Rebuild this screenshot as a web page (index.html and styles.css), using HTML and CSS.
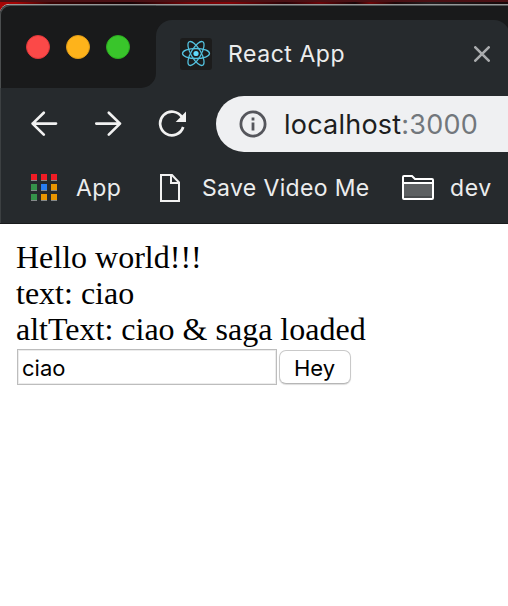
FILE: index.html
```html
<!DOCTYPE html>
<html lang="en">
<head>
<meta charset="utf-8">
<title>React App</title>
<link rel="stylesheet" href="styles.css">
</head>
<body>
<div class="desktop">
  <div class="window">
    <header class="tabstrip">
      <div class="controls">
        <div class="lights"><span class="light red"></span><span class="light yellow"></span><span class="light green"></span></div>
      </div>
      <div class="tab">
        <svg class="favicon" width="32" height="32" viewBox="0 0 32 32" fill="none" stroke="#53c1de" stroke-width="1.3">
          <rect width="32" height="32" rx="3" fill="#1c1c1c" stroke="none"/>
          <circle cx="16" cy="15.5" r="2.6" fill="#61dafb" stroke="none"/>
          <ellipse cx="16" cy="15.5" rx="13.5" ry="5"/>
          <ellipse cx="16" cy="15.5" rx="13.5" ry="5" transform="rotate(60 16 15.5)"/>
          <ellipse cx="16" cy="15.5" rx="13.5" ry="5" transform="rotate(120 16 15.5)"/>
        </svg>
        <span class="tab-title">React App</span>
        <svg class="close" width="16" height="16" viewBox="0 0 16 16" stroke="#a9abad" stroke-width="2.6" stroke-linecap="round"><path d="M1.3 1.3 14.7 14.7M14.7 1.3 1.3 14.7"/></svg>
      </div>
    </header>
    <nav class="toolbar">
      <svg class="nav-icon" width="28" height="28" viewBox="0 0 28 28" fill="none" stroke="#f1f1f1" stroke-width="2.7" stroke-linecap="round" stroke-linejoin="round"><path d="M13.8 2.8 2.6 13.6 13.8 24.6M2.6 13.6H26"/></svg>
      <svg class="nav-icon" width="28" height="28" viewBox="0 0 28 28" fill="none" stroke="#f1f1f1" stroke-width="2.7" stroke-linecap="round" stroke-linejoin="round"><path d="M14.8 2.8 26 13.6 14.8 24.6M26 13.6H2.3"/></svg>
      <svg class="nav-icon reload" width="28" height="28" viewBox="0 0 28 28" fill="none" stroke="#f1f1f1" stroke-width="2.7"><path d="M24 7.3A11.8 11.8 0 1 0 25.2 17"/><path d="M28 1.6V12H17.7Z" fill="#f1f1f1" stroke="none"/></svg>
      <div class="address">
        <svg width="28" height="28" viewBox="0 0 28 28" fill="none"><circle cx="14" cy="14" r="12.1" stroke="#55565c" stroke-width="2.8"/><path d="M12.6 7.6h2.8v2.8h-2.8zM12.6 12.6h2.8v8h-2.8z" fill="#55565c"/></svg>
        <span class="url">localhost<span class="port">:3000</span></span>
      </div>
    </nav>
    <nav class="bookmarks">
      <div class="apps"><i class="r"></i><i class="r"></i><i class="r"></i><i class="g"></i><i class="b"></i><i class="o"></i><i class="g"></i><i class="o"></i><i class="o"></i></div>
      <span class="label app-label">App</span>
      <svg class="page-icon" width="20" height="28" viewBox="0 0 20 28" fill="none" stroke="#f1f1f1" stroke-width="2"><path d="M1 1H12L19 8.5V27H1ZM11 1V9H19"/></svg>
      <span class="label save-label">Save Video Me</span>
      <svg class="folder-icon" width="32" height="25" viewBox="0 0 32 25" fill="none" stroke="#fff" stroke-width="2"><path d="M2 8h28v14H2z" fill="#5d6062" stroke="none"/><path d="M2 21h28v2H2z" fill="#494c4e" stroke="none"/><path d="M1 2Q1 1 2 1H10L13 4H30Q31 4 31 5V23Q31 24 30 24H2Q1 24 1 23ZM1 8H31"/></svg>
      <span class="label dev-label">dev</span>
    </nav>
    <main class="page">
      <div>Hello world!!!</div>
      <div>text: ciao</div>
      <div>altText: ciao &amp; saga loaded</div>
      <div class="form"><input class="field" type="text" value="ciao"><button class="button">Hey</button></div>
    </main>
  </div>
</div>
</body>
</html>
```
FILE: styles.css
```css
* { box-sizing: border-box; }
body { margin: 0; overflow: hidden; font-family: Inter, "Liberation Sans", sans-serif; }
svg { display: block; flex: none; }
.desktop {
  width: 508px; height: 606px; padding-top: 4px;
  background: linear-gradient(180deg, #4a1014 0 2px, transparent 2px), linear-gradient(90deg, #a50505 0 16px, #3a0303 50px, #170305 130px, #720407 190px, #820306 230px, #270307 285px, #6a0408 320px, #180507 355px, #6d0507 370px, #1e0708 395px, #241d1f 430px, #170809 508px);
}
.window { height: 602px; border-radius: 9px 0 0 0; overflow: hidden; background: #fff; }
.tabstrip { height: 84px; display: flex; background: linear-gradient(#191a1b 0 60px, #262a2d 60px); border-top: 1px solid #969999; border-radius: 9px 0 0 0; box-shadow: inset 1px 1px #555859; }
.controls { width: 156px; height: 83px; padding: 30px 26px; background: #191a1b; border-radius: 9px 0 15px 0; box-shadow: inset 1px 1px #4b4e4f; }
.lights { display: flex; gap: 16px; }
.light { width: 24px; height: 24px; border-radius: 50%; }
.red { background: #fb4948; border: 1px solid #df3639; }
.yellow { background: #feb31b; border: 1px solid #df9b17; }
.green { background: #39c52b; border: 1px solid #2cac20; }
.tab { flex: 1; margin: 15px -2px 0 0; padding: 0 20px 0 24px; display: flex; background: #262a2d; border-radius: 16px 16px 0 0; }
.favicon { margin-top: 18px; }
.tab-title { margin: 19px 0 0 16px; font-size: 23px; line-height: 30px; letter-spacing: .55px; color: #eceded; white-space: nowrap; }
.close { margin: 26px 0 0 auto; }
.toolbar { height: 72px; padding: 8px 0 8px 30px; display: flex; background: #262a2d; box-shadow: inset 1px 0 #3c4042; }
.nav-icon { margin: 14px 36px 0 0; }
.reload { margin-right: 30px; }
.address { flex: 1; height: 56px; padding-left: 23px; display: flex; align-items: center; background: #eff0f2; border-radius: 28px 0 0 28px; }
.url { margin: 1px 0 0 17px; font-size: 27px; line-height: 34px; letter-spacing: .22px; color: #1d1e20; white-space: nowrap; }
.port { color: #72777c; }
.bookmarks { height: 64px; padding-left: 31px; display: flex; align-items: flex-start; background: #262a2d; border-bottom: 1px solid #191b1c; box-shadow: inset 1px 0 #3c4042; }
.apps { display: grid; grid-template-columns: repeat(3, 6px); gap: 3px 4px; margin-top: 14px; }
.apps i { height: 7px; border-bottom: 1px solid #85898b; }
.r { background: #ef1c25; }
.g { background: #35934a; }
.b { background: #287df2; }
.o { background: #e99500; }
.label { margin-top: 13px; font-size: 23px; line-height: 30px; letter-spacing: .35px; color: #eceded; white-space: nowrap; }
.app-label { width: 84px; margin-left: 19px; }
.page-icon { margin-top: 14px; }
.save-label { width: 200px; margin-left: 22px; }
.folder-icon { margin-top: 15px; }
.dev-label { margin-left: 16px; letter-spacing: .6px; }
.page { padding: 15px 16px; font: 32px/36px "Liberation Serif", serif; color: #000; }
.form { display: flex; margin-left: 1px; }
.field { width: 260px; height: 36px; margin: 2px 2px 0 0; padding: 4px 4px 2px; border: 1px solid #bdbdbd; border-radius: 0; outline: 0; background: #fff; font: 22px Inter, sans-serif; color: #000; box-shadow: inset 0 0 0 1px #ececec; }
.button { width: 72px; height: 34px; margin-top: 3px; padding: 1px 1px 0 0; border: 1px solid #c9c9c9; border-bottom-color: #b6b6b6; border-radius: 7px; background: #fff; box-shadow: 0 1px 1px #ddd; font: 22px Inter, sans-serif; color: #000; }
```
